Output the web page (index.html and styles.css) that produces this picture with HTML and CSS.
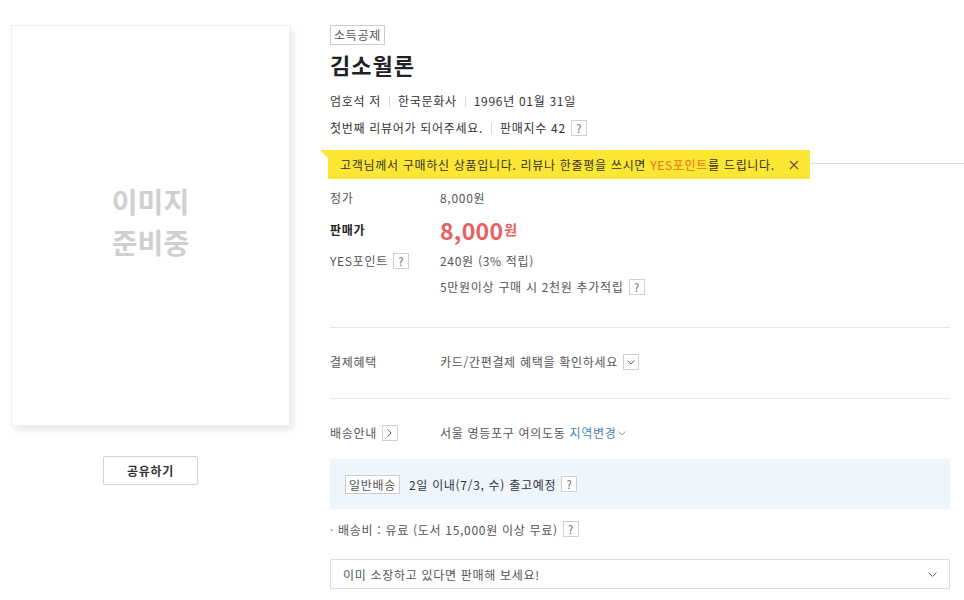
FILE: index.html
```html
<!DOCTYPE html>
<html lang="ko">
<head>
<meta charset="utf-8">
<link rel="stylesheet" href="styles.css">
</head>
<body>
<div class="page">
  <div class="left">
    <div class="cover">
      <div class="cover-text"><div>이미지</div><div>준비중</div></div>
    </div>
    <div class="share-wrap"><button class="share">공유하기</button></div>
  </div>
  <div class="right">
    <div class="badge-row"><span class="badge">소득공제</span></div>
    <h1 class="title">김소월론</h1>
    <div class="meta">
      <span>엄호석 저</span><span class="sep"></span><span>한국문화사</span><span class="sep"></span><span>1996년 01월 31일</span>
    </div>
    <div class="meta review">
      <span>첫번째 리뷰어가 되어주세요.</span><span class="sep"></span><span>판매지수 42</span><span class="q">?</span>
    </div>
    <div class="notice-line">
      <div class="notice">
        <span class="notice-text">고객님께서 구매하신 상품입니다. 리뷰나 한줄평을 쓰시면 <em>YES포인트</em>를 드립니다.</span>
        <svg class="close" width="10" height="10" viewBox="0 0 10 10"><path d="M1 1L9 9M9 1L1 9" stroke="#555" stroke-width="1.1" fill="none"/></svg>
      </div>
    </div>
    <div class="prices">
      <div class="row"><div class="label">정가</div><div class="val">8,000원</div></div>
      <div class="row big"><div class="label strong">판매가</div><div class="val"><span class="price">8,000</span><span class="won">원</span></div></div>
      <div class="row"><div class="label">YES포인트<span class="q">?</span></div><div class="val">240원 (3% 적립)</div></div>
      <div class="row"><div class="label"></div><div class="val">5만원이상 구매 시 2천원 추가적립<span class="q">?</span></div></div>
    </div>
    <div class="divider"></div>
    <div class="row sec"><div class="label">결제혜택</div><div class="val">카드/간편결제 혜택을 확인하세요<span class="q ico"><svg width="8" height="5" viewBox="0 0 8 5"><path d="M0.5 0.5L4 4L7.5 0.5" stroke="#666" fill="none"/></svg></span></div></div>
    <div class="divider d2"></div>
    <div class="row sec"><div class="label">배송안내<span class="q ico"><svg width="5" height="8" viewBox="0 0 5 8"><path d="M0.5 0.5L4 4L0.5 7.5" stroke="#666" fill="none"/></svg></span></div><div class="val">서울 영등포구 여의도동 <span class="link">지역변경<svg width="8" height="5" viewBox="0 0 8 5"><path d="M0.5 0.5L4 4L7.5 0.5" stroke="#7a9cc0" fill="none"/></svg></span></div></div>
    <div class="ship">
      <span class="ship-badge">일반배송</span><span>2일 이내(7/3, 수) 출고예정</span><span class="q">?</span>
    </div>
    <div class="fee"><span class="dot">·</span>배송비 : 유료 (도서 15,000원 이상 무료)<span class="q">?</span></div>
    <div class="select">
      <span>이미 소장하고 있다면 판매해 보세요!</span>
      <svg width="9" height="5" viewBox="0 0 9 5"><path d="M0.5 0.5L4.5 4.5L8.5 0.5" stroke="#666" fill="none"/></svg>
    </div>
  </div>
</div>
</body>
</html>
```

FILE: styles.css
```css
* { box-sizing: border-box; }
html, body { margin: 0; padding: 0; background: #fff; }
body {
  font-family: "Noto Sans CJK KR", "Noto Sans", sans-serif;
  font-size: 12px;
  letter-spacing: 0.7px;
  color: #555;
  width: 964px;
  overflow: hidden;
}
.page {
  display: flex;
  align-items: flex-start;
}
.left {
  width: 330px;
  padding: 25px 0 0 11px;
  flex: none;
}
.cover {
  width: 279px;
  height: 401px;
  border: 1px solid #efefef;
  box-shadow: 3px 4px 6px rgba(0,0,0,0.09);
  display: flex;
  align-items: center;
  justify-content: center;
  background: #fff;
}
.cover-text {
  font-size: 28px;
  font-weight: 700;
  letter-spacing: 0;
  color: #cfcfcf;
  line-height: 41px;
  text-align: center;
  margin-top: -8px;
}
.share-wrap {
  width: 279px;
  display: flex;
  justify-content: center;
  margin-top: 30px;
}
.share {
  width: 95px;
  height: 29px;
  border: 1px solid #d4d4d4;
  border-radius: 2px;
  background: #fff;
  font-family: inherit;
  font-size: 12px;
  letter-spacing: 0.7px;
  font-weight: 700;
  color: #333;
  padding: 0;
}
.right {
  width: 620px;
  padding-top: 25px;
}
.badge-row { height: 20px; display: flex; }
.badge {
  display: inline-block;
  height: 20px;
  line-height: 18px;
  padding: 0 3px;
  border: 1px solid #ccc;
  color: #555;
  font-size: 12px;
}
.title {
  margin: 4px 0 0;
  font-size: 22px;
  line-height: 30px;
  font-weight: 700;
  letter-spacing: 1px;
  color: #222;
}
.meta {
  margin-top: 12px;
  display: flex;
  align-items: center;
  height: 20px;
  line-height: 20px;
  color: #333;
}
.meta.review { margin-top: 7px; }
.sep {
  display: inline-block;
  width: 1px;
  height: 11px;
  background: #d8d8d8;
  margin: 0 8px;
}
.q {
  display: inline-flex;
  align-items: center;
  justify-content: center;
  width: 16px;
  height: 16px;
  border: 1px solid #d0d0d0;
  font-size: 11px;
  letter-spacing: 0;
  line-height: 14px;
  color: #666;
  margin-left: 5px;
  background: #fff;
}
.notice-line {
  position: relative;
  margin-top: 25px;
  margin-right: -14px;
  border-top: 1px solid #ddd;
  height: 1px;
}
.notice {
  position: absolute;
  top: -14px;
  left: -10px;
  width: 490px;
  height: 29px;
  background: #fbe733;
  clip-path: polygon(0 0, 100% 0, 100% 100%, 8px 100%, 8px 8px);
  display: flex;
  align-items: center;
  padding-left: 20px;
  color: #333;
}
.notice em { font-style: normal; color: #e8731e; }
.notice-text { line-height: 20px; }
.close { margin-left: 14px; }
.prices { margin-top: 24px; }
.row {
  display: flex;
  align-items: center;
  min-height: 20px;
  line-height: 20px;
  margin-top: 6px;
}
.prices .row:first-child { margin-top: 0; }
.row.big { min-height: 30px; margin-top: 7px; }
.label {
  width: 110px;
  flex: none;
  display: flex;
  align-items: center;
  color: #555;
}
.label.strong { font-weight: 700; color: #222; }
.val { display: flex; align-items: center; color: #555; }
.price {
  font-size: 23px;
  font-weight: 700;
  letter-spacing: 0.3px;
  color: #e8605f;
  line-height: 30px;
}
.won {
  font-size: 14px;
  font-weight: 700;
  color: #e8605f;
  margin-left: 1px;
  margin-top: -2px;
}
.divider {
  margin-top: 30px;
  border-top: 1px solid #e6e6e6;
}
.divider.d2 { margin-top: 26px; }
.row.sec { margin-top: 24px; }
.ico svg { display: block; }
.link {
  color: #4a7fb4;
  display: inline-flex;
  align-items: center;
  margin-left: 4px;
}
.link svg { margin-left: 1px; }
.ship {
  margin-top: 16px;
  height: 50px;
  background: #eef5fd;
  display: flex;
  align-items: center;
  padding-left: 15px;
  color: #333;
}
.ship-badge {
  display: inline-block;
  height: 19px;
  line-height: 17px;
  border: 1px solid #ccc;
  background: #fff;
  padding: 0 3px;
  color: #555;
  margin-right: 9px;
}
.fee {
  margin-top: 10px;
  height: 20px;
  display: flex;
  align-items: center;
  color: #555;
}
.dot { margin-right: 4px; color: #777; }
.select {
  margin-top: 20px;
  height: 30px;
  border: 1px solid #dcdcdc;
  display: flex;
  align-items: center;
  justify-content: space-between;
  padding: 0 12px 0 12px;
  color: #555;
}
```
